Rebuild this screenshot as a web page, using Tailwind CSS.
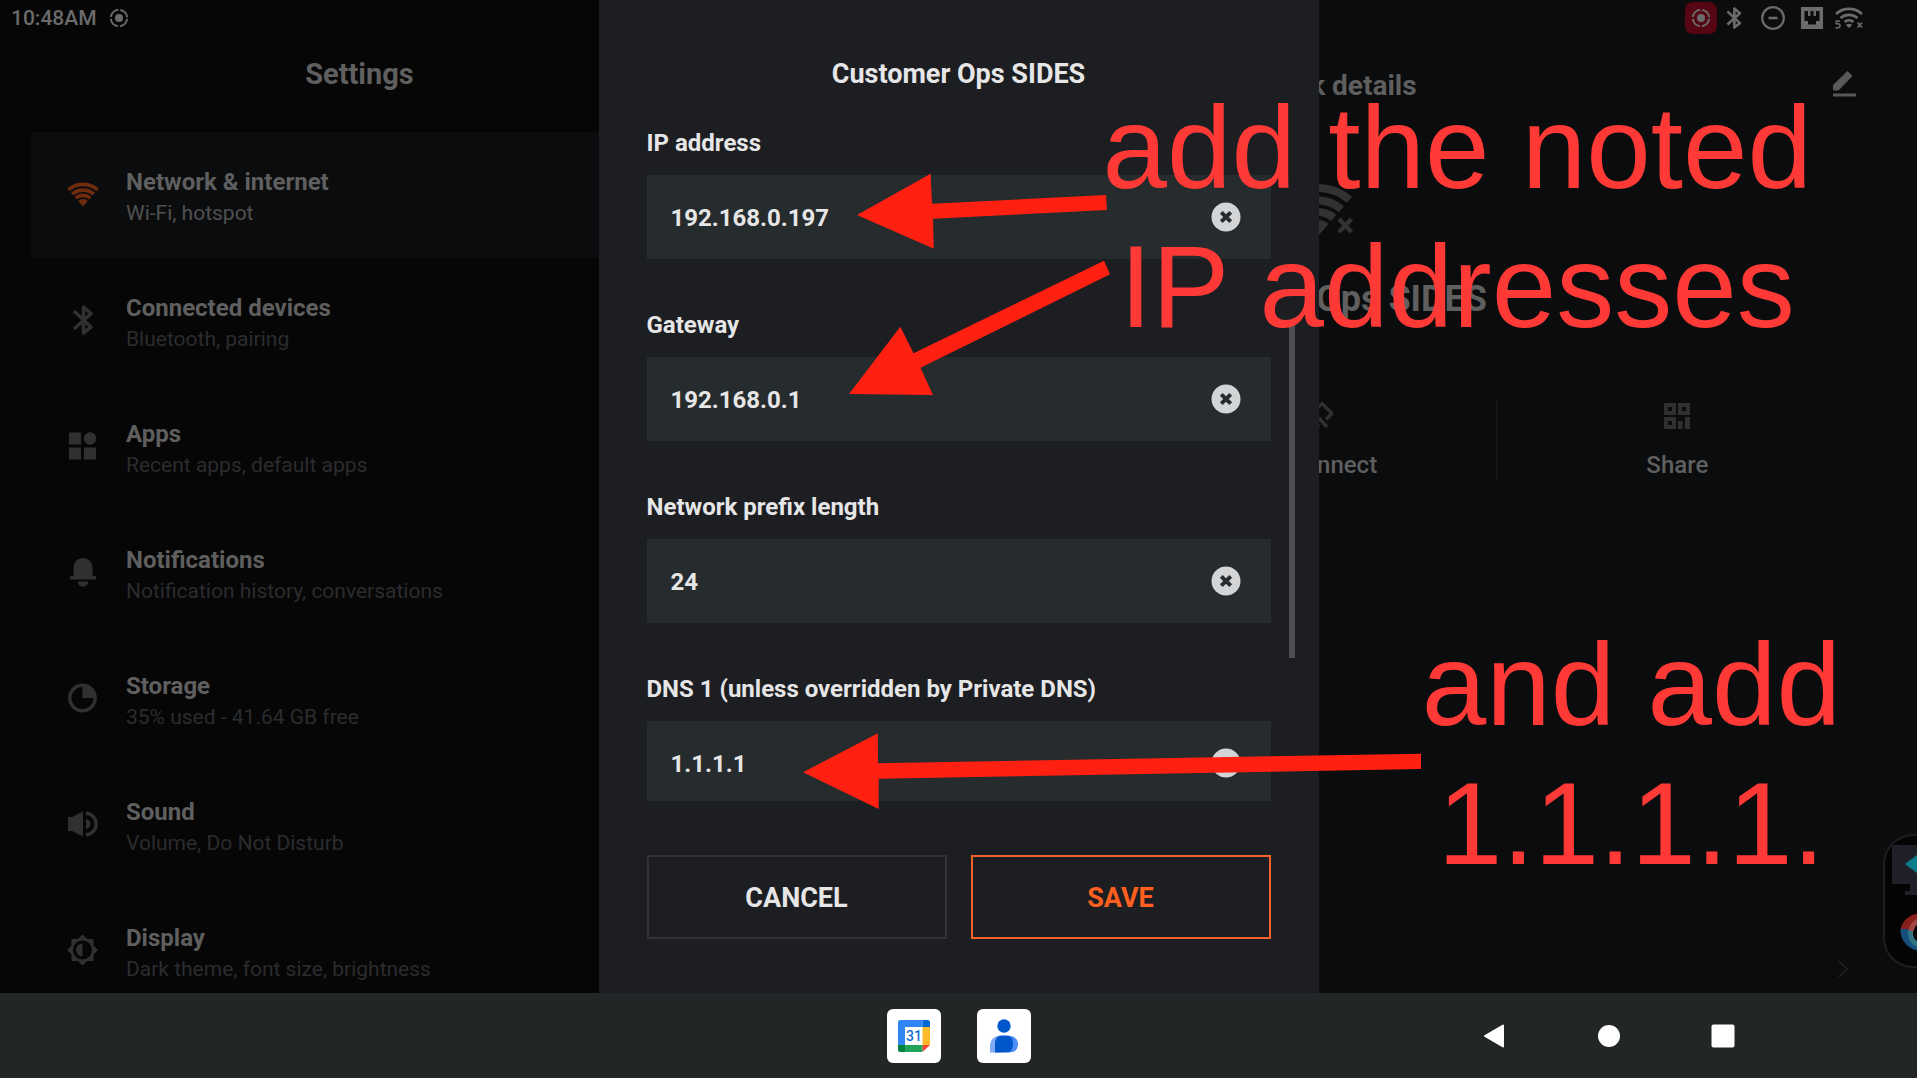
<!DOCTYPE html>
<html lang="en">
<head>
  <meta charset="UTF-8" />
  <meta name="viewport" content="width=device-width, initial-scale=1.0" />
  <title>Settings – Customer Ops SIDES</title>
  <script src="https://cdn.jsdelivr.net/npm/@tailwindcss/browser@4"></script>
</head>
<body class="relative flex h-screen flex-col overflow-hidden bg-[#060606] font-['Roboto',sans-serif] text-[#5f5f5f]">

  <!-- Shared icons -->
  <svg class="hidden">
    <symbol id="bluetooth" viewBox="0 0 22 30">
      <path d="M2 6 L19 22 L11.5 28 V2 L19 8.500 L2 24" fill="none" stroke="currentColor" stroke-width="3.600" stroke-linejoin="round" />
    </symbol>
    <symbol id="record" viewBox="0 0 20 20">
      <circle cx="10" cy="10" r="4" fill="currentColor" />
      <circle cx="10" cy="10" r="8.200" fill="none" stroke="currentColor" stroke-width="2" stroke-dasharray="10.900 2" stroke-dashoffset="-1" />
    </symbol>
    <symbol id="wifi" viewBox="0 0 72 54">
      <g fill="none" stroke="currentColor" stroke-width="8">
        <path d="M4.500 16.800 A48 48 0 0 1 67.500 16.800" />
        <path d="M12.700 26.200 A35.500 35.500 0 0 1 59.300 26.200" />
        <path d="M20.300 34.900 A24 24 0 0 1 51.700 34.900" />
      </g>
      <path d="M36 53 L25.500 40.900 A16 16 0 0 1 46.500 40.900 Z" fill="currentColor" />
    </symbol>
    <symbol id="clear" viewBox="0 0 30 30">
      <circle cx="15" cy="15" r="14.500" fill="#d3d4d6" />
      <path d="M10.300 10.300 L19.700 19.700 M19.700 10.300 L10.300 19.700" stroke="#262b2d" stroke-width="4" />
    </symbol>
  </svg>

  <!-- Status bar -->
  <header class="absolute inset-x-0 top-0 z-10 flex h-9 items-center pr-[54px] pl-[11px] text-[#6b6b6b]">
    <span class="pt-0.5 text-[21px] font-medium">10:48AM</span>
    <svg class="ml-3 size-5"><use href="#record" /></svg>
    <div class="ml-auto flex items-center">
      <span class="flex size-8 items-center justify-center rounded-lg bg-[#560512]">
        <svg class="size-5"><use href="#record" /></svg>
      </span>
      <svg class="ml-2 h-[22px] w-[18px]"><use href="#bluetooth" /></svg>
      <svg class="ml-[18px] size-6" viewBox="0 0 24 24" fill="none" stroke="currentColor">
        <circle cx="12" cy="12" r="10.800" stroke-width="2.200" />
        <path d="M7.500 12 H16.500" stroke-width="2.600" />
      </svg>
      <svg class="ml-4 size-[22px]" viewBox="0 0 22 22">
        <path fill="currentColor" fill-rule="evenodd" d="M0 0 H22 V22 H0 Z M3.500 4 V14 H7 V17.500 H15 V14 H18.500 V4 H15 V9 H12.500 V4 H9.500 V9 H7 V4 Z" />
      </svg>
      <svg class="ml-3 h-[22px] w-[28px]" viewBox="0 0 28 22" fill="none" stroke="currentColor">
        <path d="M1 7 A19 19 0 0 1 27 7 M5.500 11 A13 13 0 0 1 22.500 11 M9.500 15 A7 7 0 0 1 18.500 15" stroke-width="2.600" />
        <path d="M14 21 L10.800 18 A5 5 0 0 1 17.200 18 Z" fill="currentColor" stroke="none" />
        <path d="M5 14 H1.300 V16.700 H3 A2 2 0 0 1 3 20.700 H0.500" stroke-width="1.500" />
        <path d="M22.500 15.500 L27 20.500 M27 15.500 L22.500 20.500" stroke-width="1.800" />
      </svg>
    </div>
  </header>

  <main class="relative flex min-h-0 flex-1 overflow-hidden">

    <!-- Settings list -->
    <nav class="w-[37.5%] shrink-0 pl-[31px]">
      <h1 class="h-[132px] pt-[54px] pr-[31px] text-center text-[29px] leading-10 font-bold">Settings</h1>
      <ul>
        <li><a href="#" class="flex h-[126px] items-center bg-[#0b0c0e] pb-0.5 pl-[35px]">
          <svg class="h-[25px] w-[34px] text-[#6f2b0c]"><use href="#wifi" /></svg>
          <span class="ml-[26px] pt-1.5">
            <span class="block text-2xl leading-8 font-bold">Network &amp; internet</span>
            <span class="block text-[21px] leading-[30px] text-[#505152]">Wi-Fi, hotspot</span>
          </span>
        </a></li>
        <li><a href="#" class="flex h-[126px] items-center pb-0.5 pl-[35px]">
          <svg class="mx-1.5 h-[30px] w-[22px] text-[#2f3032]"><use href="#bluetooth" /></svg>
          <span class="ml-[26px] pt-1.5">
            <span class="block text-2xl leading-8 font-bold">Connected devices</span>
            <span class="block text-[21px] leading-[30px] text-[#2b2c2e]">Bluetooth, pairing</span>
          </span>
        </a></li>
        <li><a href="#" class="flex h-[126px] items-center pb-0.5 pl-[35px]">
          <svg class="h-8 w-[34px] text-[#2f3032]" viewBox="0 0 34 32" fill="currentColor">
            <path d="M3 2.500 H15 V14.500 H3 Z M3 17.500 H15 V29.500 H3 Z M18 17.500 H30 V29.500 H18 Z" />
            <circle cx="24" cy="8.500" r="6.200" />
          </svg>
          <span class="ml-[26px] pt-1.5">
            <span class="block text-2xl leading-8 font-bold">Apps</span>
            <span class="block text-[21px] leading-[30px] text-[#2b2c2e]">Recent apps, default apps</span>
          </span>
        </a></li>
        <li><a href="#" class="flex h-[126px] items-center pb-0.5 pl-[35px]">
          <svg class="h-8 w-[34px] text-[#2f3032]" viewBox="0 0 34 32" fill="currentColor">
            <path d="M7.500 20 V12 C7.500 -1.500 26.500 -1.500 26.500 12 V20 H30 V23.500 H4 V20 Z M11.500 25.500 H22.500 C21.500 32.500 12.500 32.500 11.500 25.500 Z" />
          </svg>
          <span class="ml-[26px] pt-1.5">
            <span class="block text-2xl leading-8 font-bold">Notifications</span>
            <span class="block text-[21px] leading-[30px] text-[#2b2c2e]">Notification history, conversations</span>
          </span>
        </a></li>
        <li><a href="#" class="flex h-[126px] items-center pb-0.5 pl-[35px]">
          <svg class="h-8 w-[34px] text-[#2f3032]" viewBox="0 0 34 32" fill="currentColor">
            <circle cx="16.500" cy="16" r="12.700" fill="none" stroke="currentColor" stroke-width="3.400" />
            <path d="M16.500 4 A12 12 0 0 1 28.500 16 H16.500 Z" />
          </svg>
          <span class="ml-[26px] pt-1.5">
            <span class="block text-2xl leading-8 font-bold">Storage</span>
            <span class="block text-[21px] leading-[30px] text-[#2b2c2e]">35% used - 41.64 GB free</span>
          </span>
        </a></li>
        <li><a href="#" class="flex h-[126px] items-center pb-0.5 pl-[35px]">
          <svg class="h-8 w-[34px] text-[#2f3032]" viewBox="0 0 34 32" fill="currentColor">
            <path d="M2 9 H6 L17 3.500 V28.500 L6 23 H2 Z M20 11 C26 12 26 20 20 21 Z" />
            <path d="M20 5.300 C33.500 5.800 33.500 26.200 20 26.700" fill="none" stroke="currentColor" stroke-width="3.400" />
          </svg>
          <span class="ml-[26px] pt-1.5">
            <span class="block text-2xl leading-8 font-bold">Sound</span>
            <span class="block text-[21px] leading-[30px] text-[#2b2c2e]">Volume, Do Not Disturb</span>
          </span>
        </a></li>
        <li><a href="#" class="flex h-[126px] items-center pb-0.5 pl-[35px]">
          <svg class="h-8 w-[34px] text-[#2f3032]" viewBox="0 0 34 32" fill="currentColor">
            <path fill-rule="evenodd" d="M16.500 0.500 L21.100 5 H27.500 V11.400 L32 16 L27.500 20.600 V27 H21.100 L16.500 31.500 L11.900 27 H5.500 V20.600 L1 16 L5.500 11.400 V5 H11.900 Z M16.500 6.500 A9.500 9.500 0 0 0 16.500 25.500 A9.500 9.500 0 0 0 16.500 6.500 Z" />
            <path d="M16.500 9.500 A6.500 6.500 0 0 0 16.500 22.500 Z" />
          </svg>
          <span class="ml-[26px] pt-1.5">
            <span class="block text-2xl leading-8 font-bold">Display</span>
            <span class="block text-[21px] leading-[30px] text-[#2b2c2e]">Dark theme, font size, brightness</span>
          </span>
        </a></li>
      </ul>
    </nav>

    <!-- Network details page, mostly behind the dialog -->
    <section class="relative flex-1 bg-[#0b0c0e] px-[60px] pt-[66px]">
      <div class="relative flex h-10 items-center justify-center">
        <h2 class="text-[28px] leading-10 font-bold">Network details</h2>
        <button class="absolute right-0 text-[#58595a]" aria-label="Edit">
          <svg class="mb-1 h-[26px] w-6" viewBox="0 0 24 26" fill="currentColor">
            <path d="M0 14 L14.500 0 L19.500 5 L5.500 19.500 H0 Z M0 22.500 H23 V25.500 H0 Z" />
          </svg>
        </button>
      </div>
      <svg class="mx-auto mt-[77px] h-[54px] w-[72px] text-[#313234]" viewBox="0 0 72 54">
        <use href="#wifi" />
        <path d="M55 33 L73 33 V52 H52 Z" fill="#0b0c0e" />
        <path d="M57 36 L69.500 49 M69.500 36 L57 49" fill="none" stroke="currentColor" stroke-width="4.500" />
      </svg>
      <h3 class="mt-[42px] text-center text-4xl leading-[40px] font-bold">Customer Ops SIDES</h3>
      <div class="mt-20 grid h-20 grid-cols-3 text-2xl font-medium">
        <div class="border-r-2 border-[#151618]"></div>
        <button class="flex flex-col items-center border-r-2 border-[#151618]">
          <svg class="mt-0.5 h-7 w-8 text-[#2f3032]" viewBox="0 0 32 28" fill="none" stroke="currentColor" stroke-width="3.400">
            <path d="M13 10 L21 2.500 L31 12.500 L25 18.500 M18 17 L26 26 M8 14 L18 26" />
          </svg>
          <span class="mt-5 leading-8">Disconnect</span>
        </button>
        <button class="flex flex-col items-center">
          <svg class="mt-1 h-[26px] w-[26px] text-[#2f3032]" viewBox="0 0 26 26" fill="currentColor" fill-rule="evenodd">
            <path d="M0 0 H12 V12 H0 Z M4 4 V8 H8 V4 Z M14 0 H26 V12 H14 Z M18 4 V8 H22 V4 Z M0 14 H12 V26 H0 Z M4 18 V22 H8 V18 Z M14 18 H18.500 V26 H14 Z M21 14 H26 V26 H21 Z" />
          </svg>
          <span class="mt-5 leading-8">Share</span>
        </button>
      </div>
      <svg class="absolute right-[68px] bottom-3.5 h-5 w-3" viewBox="0 0 12 20" fill="none" stroke="#1b1c1e" stroke-width="2">
        <path d="M1.500 2 L10 10 L1.500 18" />
      </svg>
    </section>

    <!-- Floating toolbar peeking in from the right -->
    <aside class="absolute right-0 bottom-[25px] z-10 h-[134px] w-[34px] overflow-hidden rounded-l-[30px] border-2 border-r-0 border-[#1d1e1f] bg-[#040404]">
      <svg class="h-full w-full" viewBox="0 0 32 130">
        <path d="M7 9 H32 V48 H7 Z M25 48 H32 V59 H20 V55 H25 Z" fill="#202128" />
        <path d="M20 28 L32 19 V37 Z" fill="#0a7d8a" />
        <path d="M20 94 A15 15 0 0 1 34 82" fill="none" stroke="#8a1f1c" stroke-width="9" />
        <path d="M20 93 A16 16 0 0 0 34 110" fill="none" stroke="#164f7c" stroke-width="9" />
        <path d="M26 94 A12 12 0 0 0 34 109" fill="none" stroke="#2f7480" stroke-width="5" />
        <path d="M26 95 A12 12 0 0 1 34 85" fill="none" stroke="#a04642" stroke-width="5" />
      </svg>
    </aside>

    <!-- IP settings dialog -->
    <form class="absolute inset-y-0 left-1/2 flex w-[720px] -translate-x-1/2 flex-col bg-[#1d1e22] text-[#e6e6e7]" onsubmit="return false">
      <h2 class="pt-[54px] text-center text-[27px] leading-10 font-bold">Customer Ops SIDES</h2>
      <div class="relative mt-[33px] h-[674px] overflow-hidden px-12">
        <div class="flex flex-col gap-[50px]">
          <div>
            <label for="ip" class="block h-12 text-2xl leading-8 font-bold">IP address</label>
            <div class="flex h-[84px] items-center bg-[#262b2d] pr-[30px] pl-6">
              <input id="ip" type="text" value="192.168.0.197" class="min-w-0 flex-1 bg-transparent pt-0.5 text-2xl font-bold outline-none" />
              <button type="button" aria-label="Clear"><svg class="block size-[30px]"><use href="#clear" /></svg></button>
            </div>
          </div>
          <div>
            <label for="gateway" class="block h-12 text-2xl leading-8 font-bold">Gateway</label>
            <div class="flex h-[84px] items-center bg-[#262b2d] pr-[30px] pl-6">
              <input id="gateway" type="text" value="192.168.0.1" class="min-w-0 flex-1 bg-transparent pt-0.5 text-2xl font-bold outline-none" />
              <button type="button" aria-label="Clear"><svg class="block size-[30px]"><use href="#clear" /></svg></button>
            </div>
          </div>
          <div>
            <label for="prefix" class="block h-12 text-2xl leading-8 font-bold">Network prefix length</label>
            <div class="flex h-[84px] items-center bg-[#262b2d] pr-[30px] pl-6">
              <input id="prefix" type="text" value="24" class="min-w-0 flex-1 bg-transparent pt-0.5 text-2xl font-bold outline-none" />
              <button type="button" aria-label="Clear"><svg class="block size-[30px]"><use href="#clear" /></svg></button>
            </div>
          </div>
          <div>
            <label for="dns1" class="block h-12 text-2xl leading-8 font-bold">DNS 1 (unless overridden by Private DNS)</label>
            <div class="flex h-[84px] items-center bg-[#262b2d] pr-[30px] pl-6">
              <input id="dns1" type="text" value="1.1.1.1" class="min-w-0 flex-1 bg-transparent pt-0.5 text-2xl font-bold outline-none" />
              <button type="button" aria-label="Clear"><svg class="block size-[30px]"><use href="#clear" /></svg></button>
            </div>
          </div>
        </div>
        <!-- Scroll thumb -->
        <div class="absolute top-[197px] right-6 h-[334px] w-1.5 bg-[#4d4e52]"></div>
      </div>
      <div class="mt-[54px] grid grid-cols-2 gap-6 px-12">
        <button type="button" class="h-[84px] border-2 border-[#323337] pt-0.5 text-[27px] font-bold">CANCEL</button>
        <button type="submit" class="h-[84px] border-2 border-[#f0622a] pt-0.5 text-[27px] font-bold text-[#ff5f1f]">SAVE</button>
      </div>
    </form>
  </main>

  <!-- System navigation bar -->
  <footer class="grid h-[85px] shrink-0 grid-cols-[1fr_auto_1fr] items-center bg-[#222627]">
    <div></div>
    <div class="flex gap-9">
      <button class="flex size-[54px] items-center justify-center rounded-md bg-white" aria-label="Calendar">
        <svg class="size-[34px]" viewBox="0 0 34 34">
          <path d="M3.500 1 H25.500 V8 H8 V26 H1 V3.500 A2.500 2.500 0 0 1 3.500 1 Z" fill="#3086f6" />
          <path d="M25.500 1 H30.500 A2.500 2.500 0 0 1 33 3.500 V8 H25.500 Z" fill="#0067d5" />
          <path d="M25.500 8 H33 V26 H25.500 Z" fill="#ffba2c" />
          <path d="M25.500 26 H33 L25.500 33 Z" fill="#f84135" />
          <path d="M8 26 H25.500 V33 H8 Z" fill="#20a45a" />
          <path d="M1 26 H8 V33 H3.500 A2.500 2.500 0 0 1 1 30.500 Z" fill="#00843e" />
          <text x="17" y="22" text-anchor="middle" font-family="Roboto" font-size="14" font-weight="500" fill="#1b6ed0">31</text>
        </svg>
      </button>
      <button class="flex size-[54px] items-center justify-center rounded-md bg-white" aria-label="Contacts">
        <svg class="size-[34px]" viewBox="0 0 34 34">
          <circle cx="17" cy="7" r="6.700" fill="#0057cc" />
          <path d="M3 33.500 V27 C3 20 8 16.500 14 16.500 V33.500 Z" fill="#80aaf8" />
          <path d="M20 16.500 C27 16.500 31 20 31 25 C31 30 28 33.500 22 33.500 H20 Z" fill="#4f8df6" />
          <path d="M8 33.500 V24 C8 19.500 11 16.500 15 16.500 H19 C23.500 16.500 26 19.500 26 24 V25 C26 30 23.500 33.500 19 33.500 Z" fill="#0057cc" />
        </svg>
      </button>
    </div>
    <div class="flex items-center justify-end gap-[90px] pr-[182px]">
      <button aria-label="Back"><svg class="block size-6" viewBox="0 0 24 24"><path d="M2 12 L20 1.500 V22.500 Z" fill="#fff" stroke="#fff" stroke-width="2" stroke-linejoin="round" /></svg></button>
      <button aria-label="Home"><svg class="block size-6" viewBox="0 0 24 24"><circle cx="12" cy="12" r="11" fill="#fff" /></svg></button>
      <button aria-label="Recent apps"><svg class="block size-6" viewBox="0 0 24 24"><rect x="0.500" y="0.500" width="23" height="23" rx="2" fill="#fff" /></svg></button>
    </div>
  </footer>

  <!-- Annotations -->
  <div class="pointer-events-none absolute inset-0 z-20 font-['Liberation_Sans',sans-serif] text-[116px] leading-[139px] text-[#ff3a36]">
    <svg class="absolute h-full w-full" fill="#ff2012">
      <path d="M857 215 L930.600 173.700 L932 203.700 L1106 195 L1107 210 L933 218.700 L933.800 248.700 Z" />
      <path d="M849 394 L900.300 326.700 L913.600 353.300 L1104 260.700 L1110 274.300 L920.500 367.700 L933 395 Z" />
      <path d="M803 772.300 L877.800 733.300 L878 763.300 L1421 753.700 L1421 769 L878.700 778.700 L878.700 809 Z" />
    </svg>
    <p class="absolute top-[79px] right-[105px] text-center whitespace-nowrap">add the noted<br />IP addresses</p>
    <p class="absolute top-[616px] right-[76px] text-center whitespace-nowrap">and add<br />1.1.1.1.</p>
  </div>

</body>
</html>
